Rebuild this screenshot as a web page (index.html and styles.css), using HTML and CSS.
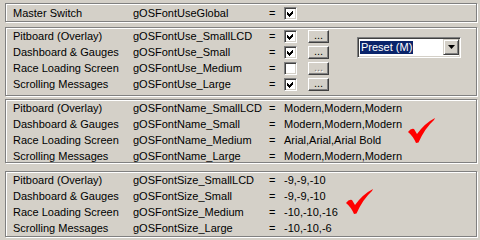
FILE: index.html
```html
<!DOCTYPE html>
<html>
<head>
<meta charset="utf-8">
<link rel="stylesheet" href="styles.css">
</head>
<body>
<div class="screen">
  <section class="panel p1">
    <div class="row"><span class="lbl">Master Switch</span><span class="key">gOSFontUseGlobal</span><span class="eq">=</span><span class="cb"><svg class="tick" viewBox="0 0 11 11"><path d="M2 4 L4 6 L8 2 L8 5 L4 9 L2 7 Z"/></svg></span></div>
  </section>

  <section class="panel p2">
    <div class="rows">
      <div class="row"><span class="lbl">Pitboard (Overlay)</span><span class="key">gOSFontUse_SmallLCD</span><span class="eq">=</span><span class="cb"><svg class="tick" viewBox="0 0 11 11"><path d="M2 4 L4 6 L8 2 L8 5 L4 9 L2 7 Z"/></svg></span><span class="btn">...</span></div>
      <div class="row"><span class="lbl">Dashboard &amp; Gauges</span><span class="key">gOSFontUse_Small</span><span class="eq">=</span><span class="cb"><svg class="tick" viewBox="0 0 11 11"><path d="M2 4 L4 6 L8 2 L8 5 L4 9 L2 7 Z"/></svg></span><span class="btn">...</span></div>
      <div class="row"><span class="lbl">Race Loading Screen</span><span class="key">gOSFontUse_Medium</span><span class="eq">=</span><span class="cb"></span><span class="btn disabled">...</span></div>
      <div class="row"><span class="lbl">Scrolling Messages</span><span class="key">gOSFontUse_Large</span><span class="eq">=</span><span class="cb"><svg class="tick" viewBox="0 0 11 11"><path d="M2 4 L4 6 L8 2 L8 5 L4 9 L2 7 Z"/></svg></span><span class="btn">...</span></div>
    </div>
    <div class="combo">
      <div class="combo-text"><span class="sel">Preset (M)</span></div>
      <div class="combo-btn"><svg viewBox="0 0 7 4" class="arrow"><path d="M0 0 H7 L3.5 4 Z"/></svg></div>
    </div>
  </section>

  <section class="panel p3">
    <div class="row"><span class="lbl">Pitboard (Overlay)</span><span class="key">gOSFontName_SmallLCD</span><span class="eq">=</span><span class="val">Modern,Modern,Modern</span></div>
    <div class="row"><span class="lbl">Dashboard &amp; Gauges</span><span class="key">gOSFontName_Small</span><span class="eq">=</span><span class="val">Modern,Modern,Modern</span></div>
    <div class="row"><span class="lbl">Race Loading Screen</span><span class="key">gOSFontName_Medium</span><span class="eq">=</span><span class="val">Arial,Arial,Arial Bold</span></div>
    <div class="row"><span class="lbl">Scrolling Messages</span><span class="key">gOSFontName_Large</span><span class="eq">=</span><span class="val">Modern,Modern,Modern</span></div>
    <svg class="redcheck rc3" viewBox="0 0 28 26"><path d="M0 14 Q3 10 6 11 L9 16 Q17 5 27 0 L26 2 Q17 10 10.5 24.5 L8 25 Q5 18 0 14 Z"/></svg>
  </section>

  <section class="panel p4">
    <div class="row"><span class="lbl">Pitboard (Overlay)</span><span class="key">gOSFontSize_SmallLCD</span><span class="eq">=</span><span class="val">-9,-9,-10</span></div>
    <div class="row"><span class="lbl">Dashboard &amp; Gauges</span><span class="key">gOSFontSize_Small</span><span class="eq">=</span><span class="val">-9,-9,-10</span></div>
    <div class="row"><span class="lbl">Race Loading Screen</span><span class="key">gOSFontSize_Medium</span><span class="eq">=</span><span class="val">-10,-10,-16</span></div>
    <div class="row"><span class="lbl">Scrolling Messages</span><span class="key">gOSFontSize_Large</span><span class="eq">=</span><span class="val">-10,-10,-6</span></div>
    <svg class="redcheck rc4" viewBox="0 0 28 26"><path d="M0 14 Q3 10 6 11 L9 16 Q17 5 27 0 L26 2 Q17 10 10.5 24.5 L8 25 Q5 18 0 14 Z"/></svg>
  </section>
</div>
</body>
</html>
```

FILE: styles.css
```css
html, body {
  margin: 0;
  padding: 0;
}
body {
  background: #d4d0c8;
  font-family: "Liberation Sans", Arial, sans-serif;
  font-size: 11px;
  color: #000;
}
.screen {
  width: 480px;
  height: 240px;
  overflow: hidden;
  padding-top: 3px;
  box-sizing: border-box;
}
.panel {
  position: relative;
  margin-left: 5px;
  width: 472px;
  box-sizing: border-box;
  border: 1px solid #808080;
  box-shadow: inset 1px 1px 0 #fff, 1px 1px 0 #fff;
  overflow: hidden;
}
.p1 { height: 19px; padding-top: 1px; }
.p2 {
  margin-top: 5px;
  height: 69px;
  display: grid;
  grid-template-columns: 351px 104px;
  align-items: start;
}
.p3 { margin-top: 3px; height: 64px; }
.p4 { margin-top: 8px; height: 66px; }

.row {
  display: flex;
  align-items: center;
  height: 16px;
  padding-left: 7px;
  white-space: nowrap;
}
.lbl { width: 120px; flex: none; }
.key { width: 136px; flex: none; }
.eq { width: 15px; flex: none; }

.cb {
  flex: none;
  width: 13px;
  height: 13px;
  box-sizing: border-box;
  background: #fff;
  border: 1px solid;
  border-color: #808080 #fff #fff #808080;
  box-shadow: inset 1px 1px 0 #404040, inset -1px -1px 0 #d4d0c8;
}
.tick {
  display: block;
  width: 11px;
  height: 11px;
  fill: #000;
  shape-rendering: crispEdges;
}
.btn {
  flex: none;
  margin-left: 11px;
  width: 21px;
  height: 13px;
  box-sizing: border-box;
  background: #d4d0c8;
  border: 1px solid;
  border-color: #fff #404040 #404040 #fff;
  box-shadow: inset -1px -1px 0 #808080;
  font-size: 11px;
  line-height: 8px;
  text-align: center;
  overflow: hidden;
}
.btn.disabled {
  color: #808080;
  text-shadow: 1px 1px 0 #fff;
}

.combo {
  margin-top: 9px;
  width: 104px;
  height: 21px;
  box-sizing: border-box;
  border: 1px solid;
  border-color: #808080 #fff #fff #808080;
  box-shadow: inset 1px 1px 0 #404040, inset -1px -1px 0 #d4d0c8;
  background: #fff;
  padding: 2px 1px 1px 1px;
  display: flex;
}
.combo-text {
  flex: 1;
  padding: 1px 0 0 1px;
}
.sel {
  display: inline-block;
  background: #0a246a;
  color: #fff;
  height: 13px;
  line-height: 13px;
  padding: 0 1px;
}
.combo-btn {
  width: 16px;
  height: 16px;
  margin-top: -1px;
  box-sizing: border-box;
  background: #d4d0c8;
  border: 1px solid;
  border-color: #d4d0c8 #404040 #404040 #d4d0c8;
  box-shadow: inset 1px 1px 0 #fff, inset -1px -1px 0 #808080;
  display: flex;
  align-items: center;
  justify-content: center;
}
.arrow {
  width: 7px;
  height: 4px;
  fill: #000;
}

.redcheck {
  position: absolute;
  width: 28px;
  height: 26px;
  fill: #f00;
}
.rc3 { left: 402px; top: 18px; }
.rc4 { left: 340px; top: 17px; }
```
